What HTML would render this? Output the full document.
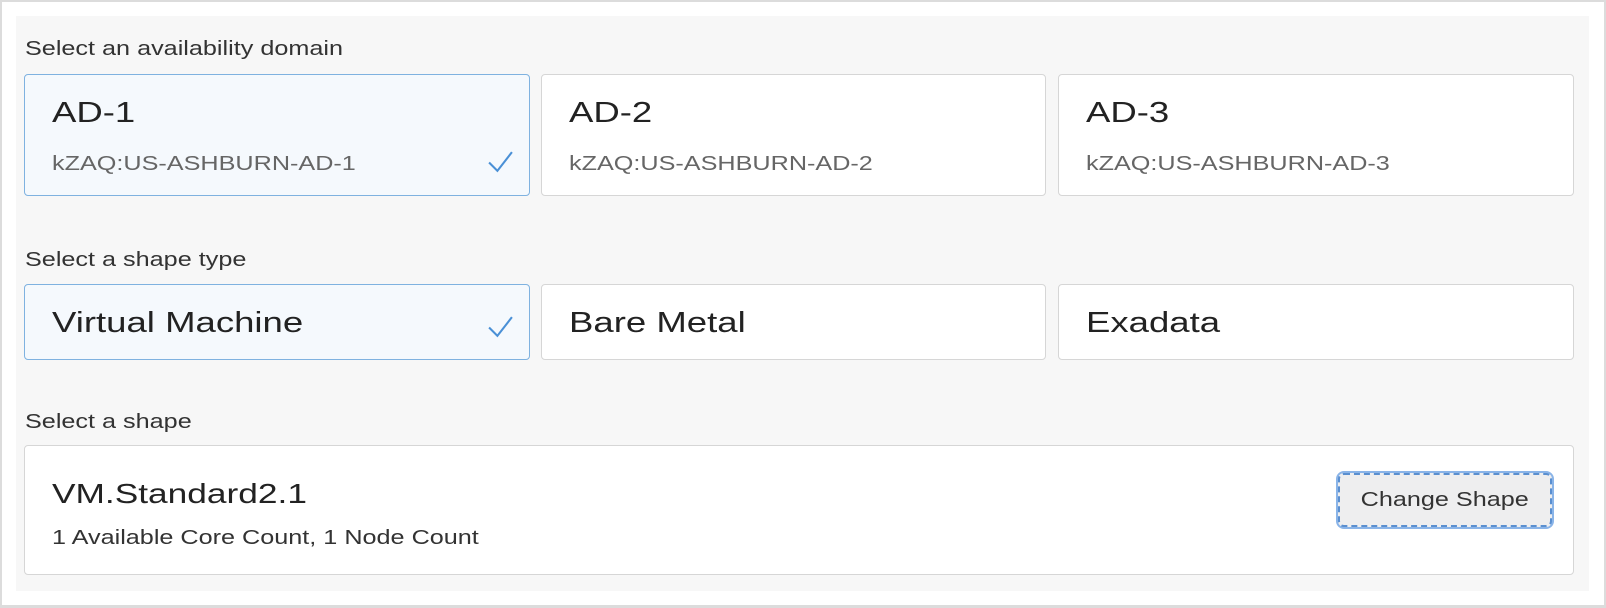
<!DOCTYPE html>
<html><head><style>
*{margin:0;padding:0;box-sizing:border-box}
body{width:1606px;height:608px;background:#fff;font-family:"Liberation Sans",sans-serif;position:relative;overflow:hidden}
.frame{position:absolute;left:0;top:0;width:1606px;height:608px;border:2px solid #dcdcdc;border-bottom-width:3px}
.panel{position:absolute;left:16px;top:16px;width:1573px;height:575px;background:#f7f7f7}
.lbl,.t,.s{transform:scaleX(1.26);transform-origin:0 50%;white-space:nowrap}
.lbl{position:absolute;left:25px;font-size:20px;line-height:1;color:#333}
.card{position:absolute;background:#fff;border:1px solid #d6d6d6;border-radius:4px}
.sel{background:#f5f9fd;border-color:#7fb2e0}
.t{position:absolute;left:27px;font-size:29px;line-height:1;color:#222}
.s{position:absolute;left:27px;font-size:20px;line-height:1;color:#666}
.chk{position:absolute;width:27px;height:23px}
.btn{position:absolute;left:1338px;top:473px;width:214px;height:54px;background:#eeeeef;border:2px dashed #5a8fd0;border-radius:6px;box-shadow:0 0 0 2px #8ab4e8;font-size:20px;color:#333;text-align:center;line-height:50px}
.btn span{display:inline-block;transform:scaleX(1.26)}
</style></head><body>
<div class="frame"></div>
<div class="panel"></div>
<div class="lbl" style="top:39px">Select an availability domain</div>
<div class="card sel" style="left:24px;top:74px;width:506px;height:122px">
 <div class="t" style="top:24px">AD-1</div>
 <div class="s" style="top:79px">kZAQ:US-ASHBURN-AD-1</div>
 <svg class="chk" style="left:462px;top:75px" viewBox="0 0 26 22"><path d="M2 12 L10 20 L24 2" fill="none" stroke="#4a90d6" stroke-width="2"/></svg>
</div>
<div class="card" style="left:541px;top:74px;width:505px;height:122px">
 <div class="t" style="top:24px">AD-2</div>
 <div class="s" style="top:79px">kZAQ:US-ASHBURN-AD-2</div>
</div>
<div class="card" style="left:1058px;top:74px;width:516px;height:122px">
 <div class="t" style="top:24px">AD-3</div>
 <div class="s" style="top:79px">kZAQ:US-ASHBURN-AD-3</div>
</div>
<div class="lbl" style="top:250px">Select a shape type</div>
<div class="card sel" style="left:24px;top:284px;width:506px;height:76px">
 <div class="t" style="top:24px">Virtual Machine</div>
 <svg class="chk" style="left:462px;top:30px" viewBox="0 0 26 22"><path d="M2 12 L10 20 L24 2" fill="none" stroke="#4a90d6" stroke-width="2"/></svg>
</div>
<div class="card" style="left:541px;top:284px;width:505px;height:76px">
 <div class="t" style="top:24px">Bare Metal</div>
</div>
<div class="card" style="left:1058px;top:284px;width:516px;height:76px">
 <div class="t" style="top:24px">Exadata</div>
</div>
<div class="lbl" style="top:412px">Select a shape</div>
<div class="card" style="left:24px;top:445px;width:1550px;height:130px">
 <div class="t" style="top:34px;font-size:28px">VM.Standard2.1</div>
 <div class="s" style="top:82px;color:#333">1 Available Core Count, 1 Node Count</div>
</div>
<div class="btn"><span>Change Shape</span></div>
</body></html>
